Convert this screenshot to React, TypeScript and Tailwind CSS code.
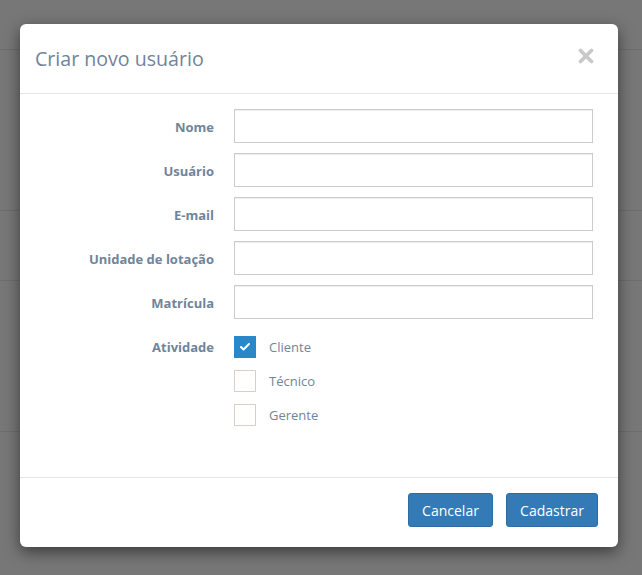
import { Check, X } from 'lucide-react';

const fields = ['Nome', 'Usuário', 'E-mail', 'Unidade de lotação', 'Matrícula'];

const activities = [
  { label: 'Cliente', checked: true },
  { label: 'Técnico', checked: false },
  { label: 'Gerente', checked: false },
];

const App = () => {
  return (
    <div className="relative h-[575px] w-[642px] overflow-hidden bg-[#777777] font-['Open_Sans',sans-serif]">
      {/* faded page behind the overlay */}
      <div className="flex flex-col">
        <div className="h-[50px] border-b border-[#6d6d6d]" />
        <div className="h-[161px] border-b border-[#6d6d6d]" />
        <div className="h-[70px] border-b border-[#6d6d6d]" />
        <div className="h-[151px] border-b border-[#6d6d6d]" />
      </div>

      <div className="absolute left-[20px] top-[24px] w-[598px] rounded-[6px] bg-white shadow-[0_5px_15px_rgba(0,0,0,0.5)]">
        <div className="flex h-[70px] items-center justify-between border-b border-[#e5e5e5] px-[15px]">
          <h4 className="text-[19.6px] leading-none text-[#71849a]">Criar novo usuário</h4>
          <X className="mr-[6px] h-[22px] w-[22px] -translate-y-[3px] text-[#c9c9c9]" strokeWidth={4} />
        </div>

        <div className="flex flex-col gap-[10px] pb-[51px] pt-[15px]">
          {fields.map((f) => (
            <div key={f} className="flex items-center">
              <label className="w-[194px] pt-[4px] text-right text-[13px] font-bold text-[#71849a]">{f}</label>
              <input className="ml-[20px] h-[34px] w-[359px] border border-[#cccccc] shadow-[inset_0_1px_1px_rgba(0,0,0,0.075)] outline-none" />
            </div>
          ))}
          <div className="mt-[7px] flex">
            <label className="h-[22px] w-[194px] text-right text-[13px] font-bold leading-[22px] text-[#71849a]">
              Atividade
            </label>
            <div className="ml-[20px] flex flex-col gap-[12px]">
              {activities.map((a) => (
                <div key={a.label} className="flex items-center">
                  {a.checked ? (
                    <span className="flex h-[22px] w-[22px] items-center justify-center bg-[#2a88c9]">
                      <Check className="h-[12px] w-[12px] text-white" strokeWidth={4} />
                    </span>
                  ) : (
                    <span className="h-[22px] w-[22px] border border-[#d6d1cc] bg-white" />
                  )}
                  <span className="ml-[13px] text-[13px] leading-[22px] text-[#71849a]">{a.label}</span>
                </div>
              ))}
            </div>
          </div>
        </div>

        <div className="flex justify-end gap-[13px] border-t border-[#e5e5e5] pb-[20px] pl-[15px] pr-[20px] pt-[15px]">
          <button className="h-[34px] w-[85px] rounded-[3px] border border-[#2e6da4] bg-[#337ab7] text-[14px] text-white">
            Cancelar
          </button>
          <button className="h-[34px] w-[92px] rounded-[3px] border border-[#2e6da4] bg-[#337ab7] text-[14px] text-white">
            Cadastrar
          </button>
        </div>
      </div>
    </div>
  );
};

export default App;
